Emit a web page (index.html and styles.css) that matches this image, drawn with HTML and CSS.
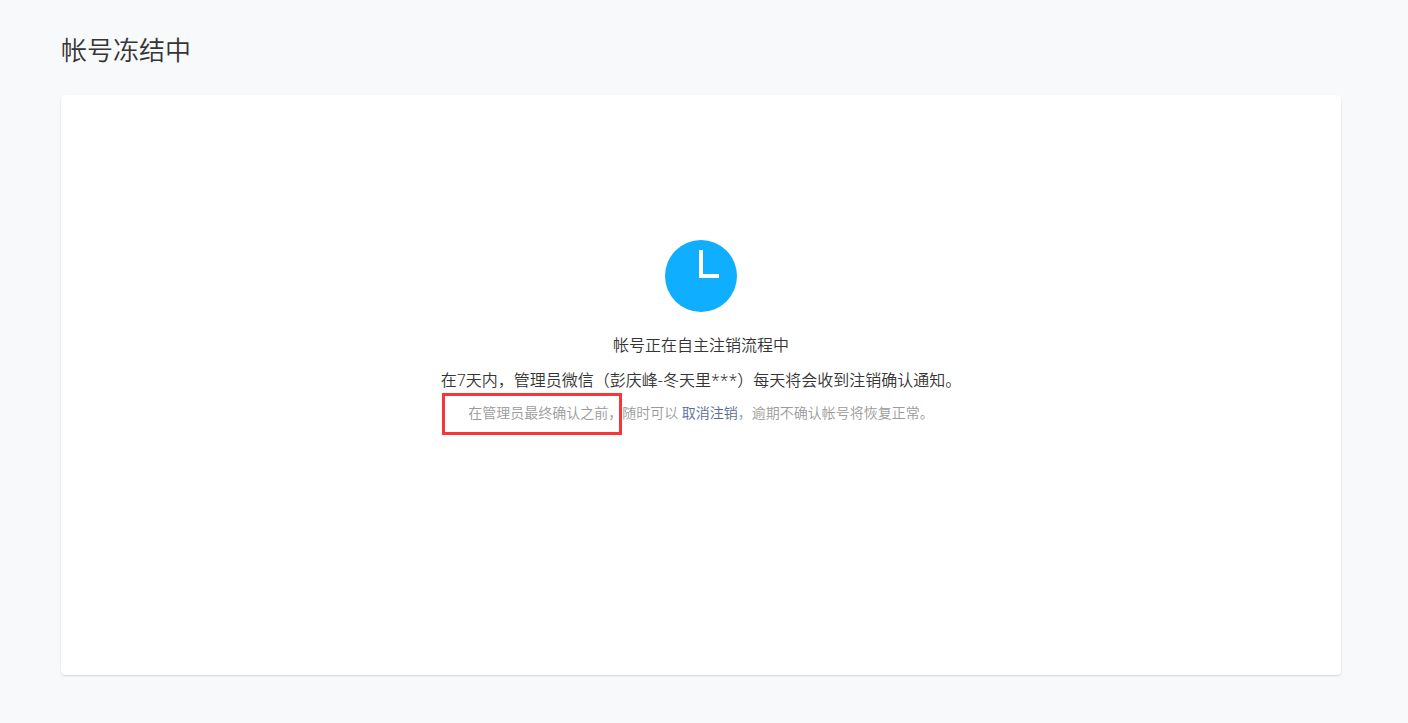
FILE: index.html
```html
<!DOCTYPE html>
<html lang="zh-CN">
<head>
<meta charset="utf-8">
<meta name="viewport" content="width=device-width, initial-scale=1">
<title>帐号冻结中</title>
<link rel="stylesheet" href="styles.css">
</head>
<body>
<main class="page">
  <h1 class="page-title">帐号冻结中</h1>
  <section class="card">
    <svg class="status-icon" viewBox="0 0 72 72" aria-hidden="true">
      <circle cx="36" cy="36" r="36" fill="#10aeff"/>
      <path d="M36 10V36H54" fill="none" stroke="#fff" stroke-width="4"/>
    </svg>
    <h2 class="status-title">帐号正在自主注销流程中</h2>
    <p class="status-text">在7天内，管理员微信（彭庆峰-冬天里***）每天将会收到注销确认通知。</p>
    <p class="status-note"><span class="marked">在管理员最终确认之前，</span>随时可以 <a class="link" href="#">取消注销</a>，逾期不确认帐号将恢复正常。</p>
  </section>
</main>
</body>
</html>
```
FILE: styles.css
```css
* {
  box-sizing: border-box;
}

body {
  margin: 0;
  background: #f8f9fb;
  color: #353535;
  font-family: "Noto Sans", "Noto Sans CJK SC", sans-serif;
  font-size: 16px;
  font-weight: 350;
}

.page {
  padding: 30px 67px 48px 61px;
}

.page-title {
  margin: 0 0 25px;
  font-size: 26px;
  font-weight: 350;
  line-height: 40px;
}

.card {
  display: flex;
  flex-direction: column;
  align-items: center;
  min-height: 580px;
  padding: 145px 24px;
  background: #fff;
  border-radius: 4px;
  box-shadow: 0 1px 2px rgba(0, 0, 0, 0.15);
  text-align: center;
}

.status-icon {
  width: 72px;
  height: 72px;
  margin-bottom: 20px;
}

.status-title,
.status-text,
.status-note {
  margin: 0;
  font-weight: 350;
}

.status-title {
  margin-bottom: 8px;
  font-size: 16px;
  line-height: 27px;
}

.status-text {
  line-height: 27px;
}

.status-note {
  margin-top: 8px;
  color: #9a9a9a;
  font-size: 14px;
  line-height: 22px;
}

.marked {
  position: relative;
}

.marked::before {
  content: "";
  position: absolute;
  inset: -10px 0 -13px -26px;
  border: 3px solid #fa3538;
}

.link {
  color: #576b95;
  text-decoration: none;
}
```
